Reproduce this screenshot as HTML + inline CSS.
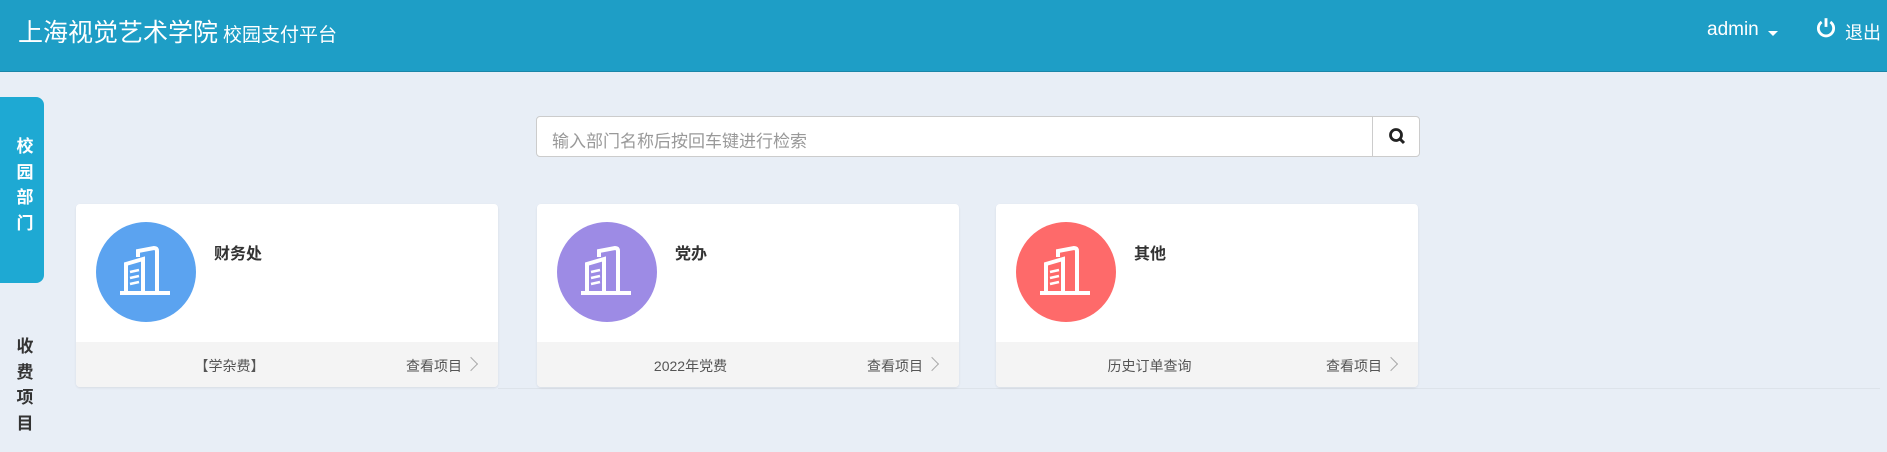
<!DOCTYPE html>
<html><head><meta charset="utf-8"><style>
*{margin:0;padding:0;box-sizing:border-box}
body{width:1887px;height:452px;background:#e8eef6;font-family:"Liberation Sans","Noto Sans CJK SC",sans-serif;position:relative;overflow:hidden}
.hd{position:absolute;left:0;top:0;width:1887px;height:72px;background:#1e9ec6;border-bottom:1px solid #1a86a8;color:#fff}
.t1{position:absolute;left:18px;top:13px;font-size:25px;white-space:nowrap}
.t1 small{font-size:19px;margin-left:5px}
.adm{position:absolute;left:1707px;top:19px;font-size:19px}
.car{position:absolute;left:1768px;top:31px;border-left:5px solid transparent;border-right:5px solid transparent;border-top:5px solid #fff}
.pw{position:absolute;left:1814px;top:16px}
.out{position:absolute;left:1845px;top:19px;font-size:18px}
.tab{position:absolute;left:0;top:97px;width:44px;height:186px;background:#1ea9d3;border-radius:0 8px 8px 0}
.vt{position:absolute;left:15px;width:20px;font-size:17px;font-weight:bold;line-height:25.5px;text-align:center}
.srch{position:absolute;left:536px;top:116px;width:884px;height:41px;background:#fff;border:1px solid #ccc;border-radius:4px}
.srch span{position:absolute;left:15px;top:10px;color:#999;font-size:17px}
.srch .b{position:absolute;left:835px;top:0;width:48px;height:39px;border-left:1px solid #ccc}
.card{position:absolute;top:204px;width:422px;height:183px;background:#fff;border-radius:4px;box-shadow:0 1px 2px rgba(0,0,0,.08);overflow:hidden}
.card .c{position:absolute;left:20px;top:18px;width:100px;height:100px;border-radius:50%}
.card .n{position:absolute;left:138px;top:36px;font-size:16px;font-weight:bold;color:#333}
.card .f{position:absolute;left:0;top:138px;width:100%;height:45px;background:#f4f4f4;font-size:14px;color:#555}
.f .l{position:absolute;left:0;width:307px;text-align:center;top:14px}
.f .r{position:absolute;right:36px;top:14px}
.f .ch{position:absolute;right:22px;top:15px;width:10px;height:10px;border-right:1.5px solid #aaa;border-top:1.5px solid #aaa;transform:rotate(45deg);margin-top:2px}
.line{position:absolute;left:498px;top:388px;width:1382px;height:1px;background:#dde3ea}
</style></head><body>
<div class="hd"><div class="t1">上海视觉艺术学院<small>校园支付平台</small></div>
<div class="adm">admin</div><div class="car"></div>
<svg class="pw" width="24" height="24" viewBox="0 0 22 22"><path d="M7 5.5A7 7 0 1 0 15 5.5" fill="none" stroke="#fff" stroke-width="2.6"/><line x1="11" y1="2" x2="11" y2="10" stroke="#fff" stroke-width="2.6"/></svg>
<div class="out">退出</div></div>
<div class="tab"></div>
<div class="vt" style="top:134px;color:#fff">校<br>园<br>部<br>门</div>
<div class="vt" style="top:334px;color:#333">收<br>费<br>项<br>目</div>
<div class="srch"><span>输入部门名称后按回车键进行检索</span><div class="b"><svg width="48" height="39" viewBox="0 0 48 39"><circle cx="23" cy="18" r="5.5" fill="none" stroke="#222" stroke-width="2.8"/><line x1="27" y1="22" x2="31" y2="26" stroke="#222" stroke-width="3"/></svg></div></div>
<div class="line"></div>

<div class="card" style="left:76px"><div class="c" style="background:#5ba3f0"><svg width="100" height="100" viewBox="0 0 100 100"><g fill="none" stroke="#fff" stroke-width="4"><path d="M30 70V42L47 37V70"/><path d="M42 35V29L58 26Q61 26 61 29V70"/></g><path d="M24 71H74" stroke="#fff" stroke-width="4"/><g stroke="#fff" stroke-width="2.6"><path d="M34 50L43 48M34 56L43 54M34 62L43 60"/></g></svg></div><div class="n">财务处</div><div class="f"><div class="l">【学杂费】</div><div class="r">查看项目</div><div class="ch"></div></div></div>

<div class="card" style="left:537px"><div class="c" style="background:#9d8be5"><svg width="100" height="100" viewBox="0 0 100 100"><g fill="none" stroke="#fff" stroke-width="4"><path d="M30 70V42L47 37V70"/><path d="M42 35V29L58 26Q61 26 61 29V70"/></g><path d="M24 71H74" stroke="#fff" stroke-width="4"/><g stroke="#fff" stroke-width="2.6"><path d="M34 50L43 48M34 56L43 54M34 62L43 60"/></g></svg></div><div class="n">党办</div><div class="f"><div class="l">2022年党费</div><div class="r">查看项目</div><div class="ch"></div></div></div>

<div class="card" style="left:996px"><div class="c" style="background:#fe6a6a"><svg width="100" height="100" viewBox="0 0 100 100"><g fill="none" stroke="#fff" stroke-width="4"><path d="M30 70V42L47 37V70"/><path d="M42 35V29L58 26Q61 26 61 29V70"/></g><path d="M24 71H74" stroke="#fff" stroke-width="4"/><g stroke="#fff" stroke-width="2.6"><path d="M34 50L43 48M34 56L43 54M34 62L43 60"/></g></svg></div><div class="n">其他</div><div class="f"><div class="l">历史订单查询</div><div class="r">查看项目</div><div class="ch"></div></div></div>
</body></html>
